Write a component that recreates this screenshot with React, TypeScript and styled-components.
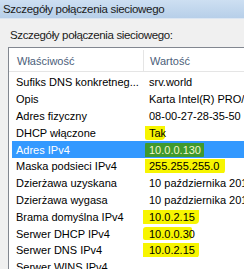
import React from "react";
import styled, { createGlobalStyle } from "styled-components";

const GlobalStyle = createGlobalStyle`
  html, body { margin: 0; padding: 0; background: #f0f0f0; }
  body { font-family: "Liberation Sans", Arial, sans-serif; font-size: 11px; }
`;

const Window = styled.div`
  width: 244px;
  height: 269px;
  overflow: hidden;
  background: #f0f0f0;
  display: flex;
  flex-direction: column;
`;

const TitleBar = styled.div`
  height: 18px;
  flex: none;
  display: flex;
  align-items: center;
  padding-left: 3px;
  background: linear-gradient(#cddff2, #b7cfe9);
  border-bottom: 1px solid #dce6f2;
  color: #1a1a1a;
  font-size: 11.5px;
  letter-spacing: -0.3px;
  white-space: nowrap;
`;

const Body = styled.div`
  flex: 1;
  display: flex;
  flex-direction: column;
  padding: 9px 0 0 8px;
  min-height: 0;
`;

const Caption = styled.div`
  padding-left: 2px;
  height: 14px;
  line-height: 14px;
  font-size: 11.5px;
  letter-spacing: -0.35px;
  color: #1a1a1a;
  white-space: nowrap;
`;

const ListView = styled.div`
  margin-top: 5px;
  flex: 1;
  background: #ffffff;
  border-top: 1px solid #828790;
  border-left: 1px solid #828790;
  min-height: 0;
  overflow: hidden;
`;

const HeaderRow = styled.div`
  display: grid;
  grid-template-columns: 134px 1fr;
  height: 24px;
  padding-top: 2px;
  box-sizing: border-box;
  border-bottom: 1px solid #e5e5e5;
`;

const HeaderCell = styled.div<{ $divider?: boolean }>`
  display: flex;
  align-items: center;
  padding-left: ${(p) => (p.$divider ? "6px" : "8px")};
  color: #4c607a;
  border-left: ${(p) => (p.$divider ? "1px solid #e5e5e5" : "none")};
  white-space: nowrap;
`;

const Rows = styled.div`
  padding: 2px 0 0 3px;
  display: flex;
  flex-direction: column;
`;

const Row = styled.div<{ $selected?: boolean }>`
  display: grid;
  grid-template-columns: 131px 1fr;
  height: 16.8px;
  align-items: center;
  background: ${(p) => (p.$selected ? "#3399ff" : "transparent")};
  color: ${(p) => (p.$selected ? "#ffffff" : "#000000")};
  white-space: nowrap;
`;

const Cell = styled.div<{ $value?: boolean }>`
  padding-left: ${(p) => (p.$value ? "6px" : "4px")};
  overflow: hidden;
  line-height: 14px;
`;

type Mark = { l: number; r: number; t: number; b: number; color: string; text?: string };

const Marked = styled.span<{ $m: Mark }>`
  position: relative;
  display: inline-block;
  z-index: 0;
  color: ${(p) => p.$m.text ?? "inherit"};
  &::before {
    content: "";
    position: absolute;
    z-index: -1;
    left: ${(p) => -p.$m.l}px;
    right: ${(p) => -p.$m.r}px;
    top: ${(p) => -p.$m.t}px;
    bottom: ${(p) => -p.$m.b}px;
    background: ${(p) => p.$m.color};
    border-radius: 3px 2px 4px 2px;
  }
`;

const YELLOW = "#f7f500";

type Item = { k: string; v: string; sel?: boolean; mark?: Mark };

const items: Item[] = [
  { k: "Sufiks DNS konkretneg...", v: "srv.world" },
  { k: "Opis", v: "Karta Intel(R) PRO/1000 MT Desktop" },
  { k: "Adres fizyczny", v: "08-00-27-28-35-50" },
  { k: "DHCP włączone", v: "Tak", mark: { l: 4, r: -1, t: 6, b: 0, color: YELLOW } },
  {
    k: "Adres IPv4",
    v: "10.0.0.130",
    sel: true,
    mark: { l: 4, r: 3, t: 1, b: 2, color: "#3f9a2e", text: "#f4f7c8" },
  },
  { k: "Maska podsieci IPv4", v: "255.255.255.0", mark: { l: 4, r: 6, t: 2, b: 1, color: YELLOW } },
  { k: "Dzierżawa uzyskana", v: "10 października 2017 12:00:00" },
  { k: "Dzierżawa wygasa", v: "10 października 2017 13:00:00" },
  { k: "Brama domyślna IPv4", v: "10.0.2.15", mark: { l: 7, r: 4, t: 2, b: 0, color: YELLOW } },
  { k: "Serwer DHCP IPv4", v: "10.0.0.30", mark: { l: 6, r: -3, t: 0, b: -1, color: YELLOW } },
  { k: "Serwer DNS IPv4", v: "10.0.2.15", mark: { l: 7, r: 4, t: 1, b: 1, color: YELLOW } },
  { k: "Serwer WINS IPv4", v: "" },
];

export default function App() {
  return (
    <>
      <GlobalStyle />
      <Window>
        <TitleBar>Szczegóły połączenia sieciowego</TitleBar>
        <Body>
          <Caption>Szczegóły połączenia sieciowego:</Caption>
          <ListView>
            <HeaderRow>
              <HeaderCell>Właściwość</HeaderCell>
              <HeaderCell $divider>Wartość</HeaderCell>
            </HeaderRow>
            <Rows>
              {items.map((it) => (
                <Row key={it.k} $selected={it.sel}>
                  <Cell>{it.k}</Cell>
                  <Cell $value>{it.mark ? <Marked $m={it.mark}>{it.v}</Marked> : it.v}</Cell>
                </Row>
              ))}
            </Rows>
          </ListView>
        </Body>
      </Window>
    </>
  );
}
